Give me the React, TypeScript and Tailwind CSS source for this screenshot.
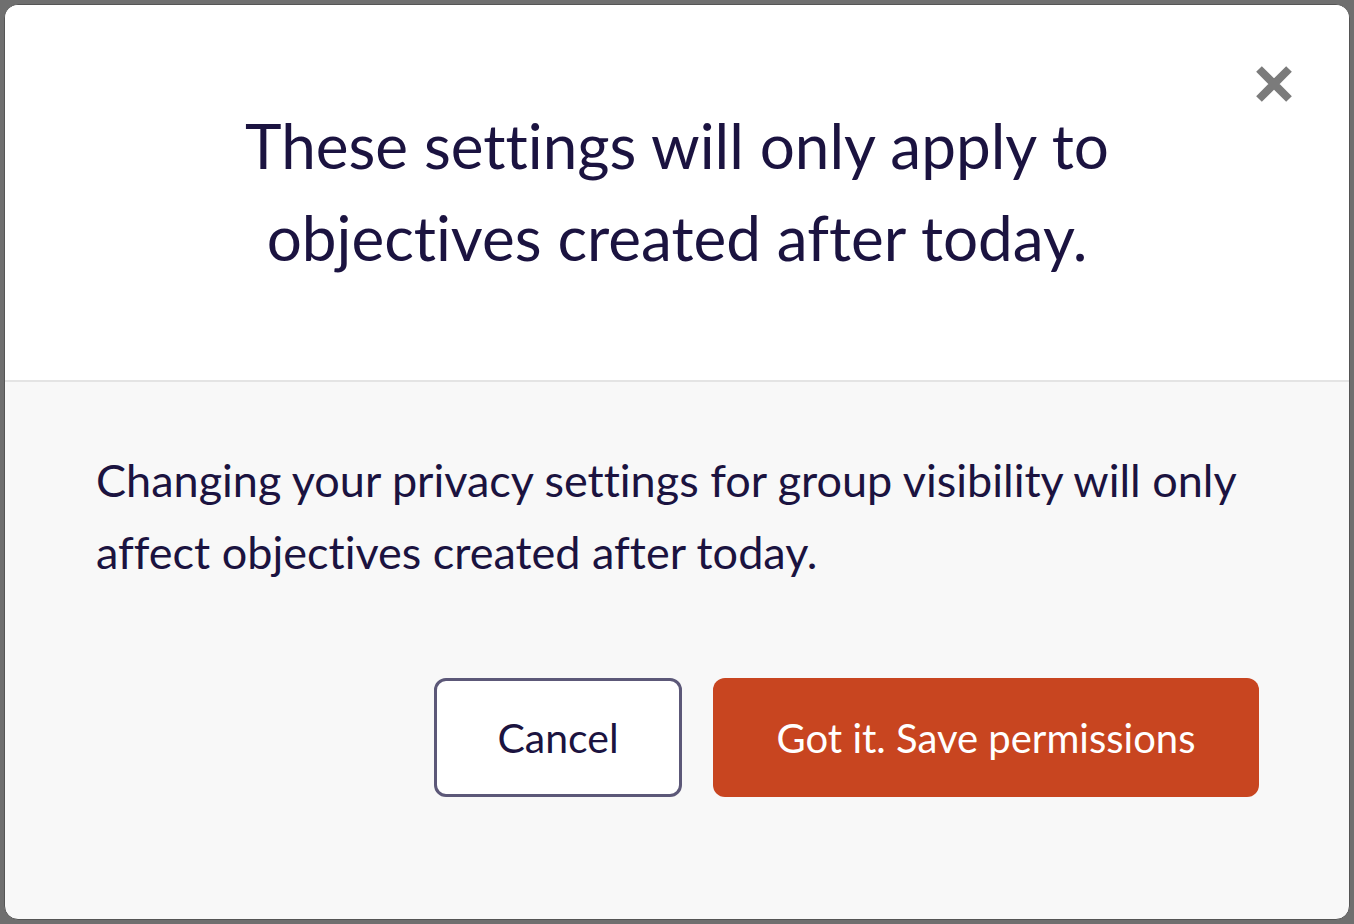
import React from "react";

export default function App() {
  return (
    <div className="w-[1354px] h-[924px] bg-[#6f6f6f] p-[4px] flex [font-variant-ligatures:none]" style={{ fontFamily: "Lato, 'Noto Sans', sans-serif" }}>
      <div className="relative flex-1 flex flex-col rounded-[14px] border border-[#555555] overflow-hidden bg-[#f8f8f8]">
        <div className="h-[377px] bg-white flex items-center justify-center border-b-2 border-[#e4e4e4] pb-[4px]">
          <h1 className="text-[62px] leading-[92px] text-[#1b1340] text-center font-normal">
            These settings will only apply to
            <br />
            objectives created after today.
          </h1>
        </div>
        <button className="absolute right-[56px] top-[60px] w-[38px] h-[38px] flex items-center justify-center" aria-label="Close">
          <svg width="38" height="38" viewBox="0 0 38 38">
            <path d="M4 4 L34 34 M34 4 L4 34" stroke="#7b7b7b" strokeWidth="8" strokeLinecap="butt" />
          </svg>
        </button>
        <div className="flex flex-col flex-1 pl-[91px] pr-[90px] pt-[62px]">
          <p className="text-[45px] leading-[72px] text-[#1b1340]">
            Changing your privacy settings for group visibility will only
            <br />
            affect objectives created after today.
          </p>
          <div className="flex justify-end gap-[31px] mt-[90px]">
            <button className="w-[248px] h-[119px] rounded-[12px] border-[3px] border-[#5c5878] bg-white text-[41px] text-[#1b1340]">
              Cancel
            </button>
            <button className="w-[546px] h-[119px] rounded-[12px] bg-[#c84520] text-[40px] text-white">
              Got it. Save permissions
            </button>
          </div>
        </div>
      </div>
    </div>
  );
}
